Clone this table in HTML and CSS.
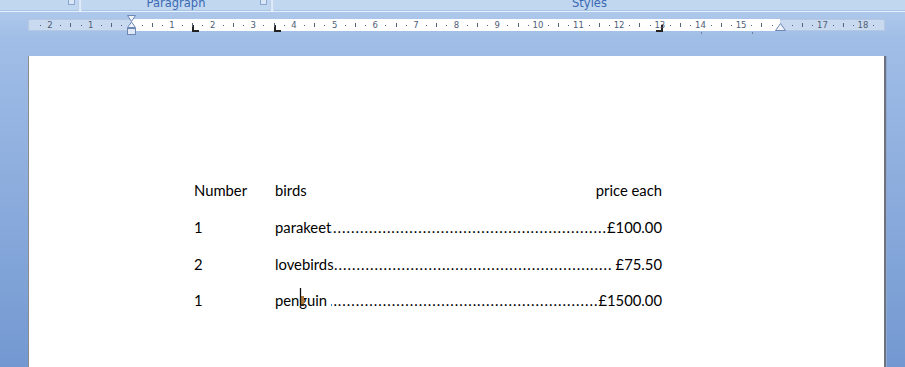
FILE: index.html
```html
<!DOCTYPE html>
<html>
<head>
<meta charset="utf-8">
<link rel="stylesheet" href="styles.css">
</head>
<body>
<div class="ribbon">
  <div class="group g1"><span class="launcher"></span></div>
  <div class="sep"></div>
  <div class="group g2"><span class="label">Paragraph</span><span class="launcher"></span></div>
  <div class="sep"></div>
  <div class="group g3"><span class="label">Styles</span></div>
</div>
<div class="ruler-bar">
  <div class="ruler" id="ruler">
    <div class="seg seg-gray seg-left"></div>
    <div class="seg seg-white"></div>
    <div class="seg seg-gray seg-right"></div>
    <svg class="marker hourglass" width="11" height="21" viewBox="0 0 11 21">
      <path d="M1.5 0.5 H9.5 L5.5 6.5 Z" fill="#eef3fb" stroke="#6f87b3"/>
      <path d="M5.5 7 L9.5 12.5 H1.5 Z" fill="#eef3fb" stroke="#6f87b3"/>
      <rect x="1.5" y="13.5" width="8" height="6" fill="#dfe8f6" stroke="#6f87b3"/>
    </svg>
    <svg class="marker tab tab1" width="7" height="7" viewBox="0 0 7 7"><path d="M1 0 V6 H7" fill="none" stroke="#222" stroke-width="2"/></svg>
    <svg class="marker tab tab2" width="7" height="7" viewBox="0 0 7 7"><path d="M1 0 V6 H7" fill="none" stroke="#222" stroke-width="2"/></svg>
    <svg class="marker tab tab3" width="7" height="7" viewBox="0 0 7 7"><path d="M6 0 V6 H0" fill="none" stroke="#222" stroke-width="2"/></svg>
    <svg class="marker rindent" width="11" height="8" viewBox="0 0 11 8">
      <path d="M5.5 0.5 L10.5 7.5 H0.5 Z" fill="#eef3fb" stroke="#6f87b3"/>
    </svg>
  </div>
  <span class="dtab dtab1"></span>
  <span class="dtab dtab2"></span>
</div>
<div class="doc">
  <div class="page">
    <div class="tabs">
      <div class="row">
        <span class="c1">Number</span>
        <span class="c2 head"><span>birds</span><span>price each</span></span>
      </div>
      <div class="row">
        <span class="c1">1</span>
        <span class="c2"><span>parakeet</span><span class="leader"><span>....................................................................................................</span></span><span>£100.00</span></span>
      </div>
      <div class="row">
        <span class="c1">2</span>
        <span class="c2"><span>lovebirds</span><span class="leader"><span>....................................................................................................</span></span><span class="gap-l">£75.50</span></span>
      </div>
      <div class="row">
        <span class="c1">1</span>
        <span class="c2"><span class="gap-r">penguin</span><span class="leader"><span>....................................................................................................</span></span><span>£1500.00</span></span>
      </div>
    </div>
    <svg class="ibeam" width="8" height="20" viewBox="0 0 8 20">
      <rect x="2" y="8" width="3" height="10" fill="#b07a3c"/>
      <path d="M1.5 0 V17 M1.5 17 H5" stroke="#111" stroke-width="1.3" fill="none"/>
    </svg>
  </div>
</div>
<script src="ruler.js"></script>
</body>
</html>
```
FILE: styles.css
```css
html, body {
  margin: 0;
  padding: 0;
}
body {
  width: 905px;
  height: 367px;
  overflow: hidden;
  background: #9fbce5;
  font-family: "Lato", "Liberation Sans", sans-serif;
}
.ribbon {
  display: flex;
  height: 11px;
  background: #c3d8f1;
  border-bottom: 1px solid #e6f0fb;
  overflow: hidden;
}
.group {
  position: relative;
  height: 10px;
  background: #c1d7f0;
  display: flex;
  justify-content: center;
  border-bottom: 1px solid #aac4e6;
  overflow: hidden;
}
.g1 { width: 78px; }
.g2 { width: 188px; }
.g3 { flex: 1; }
.sep {
  width: 4px;
  height: 11px;
  background: linear-gradient(to right, #a9c3e6, #eef5fd 50%, #b5cdec);
}
.label {
  font-family: "DejaVu Sans", sans-serif;
  font-size: 11.5px;
  line-height: 12px;
  margin-top: -3px;
  color: #3b69b3;
}
.launcher {
  position: absolute;
  right: 3px;
  top: 0;
  width: 5px;
  height: 4px;
  border: 1px solid #8aa6cf;
  border-top: none;
  background: #d8e6f6;
}
.ruler-bar {
  position: relative;
  height: 23px;
  background: linear-gradient(to bottom, #aec8ea, #a2bfe7);
  padding-left: 28px;
  box-sizing: border-box;
  padding-top: 7px;
}
.ruler {
  position: relative;
  width: 857px;
  height: 12px;
  display: flex;
}
.seg { height: 12px; box-sizing: border-box; }
.seg-gray {
  background: #c9d9ef;
  border: 1px solid #b4c8e4;
}
.seg-left { width: 103px; border-right: none; }
.seg-white { width: 649px; background: #ffffff; }
.seg-right { flex: 1; border-left: none; }
.tick {
  position: absolute;
  background: #55627a;
  width: 1px;
}
.tick.dot { height: 1px; top: 6px; }
.tick.line { height: 4px; top: 4px; }
.num {
  position: absolute;
  top: 0;
  width: 14px;
  margin-left: -7px;
  text-align: center;
  font-family: "DejaVu Sans", sans-serif;
  font-size: 8.5px;
  line-height: 12px;
  color: #4e5d75;
}
.marker { position: absolute; }
.hourglass { left: 98px; top: -4px; }
.tab { top: 6px; }
.tab1 { left: 164px; }
.tab2 { left: 246px; }
.tab3 { left: 628px; }
.rindent { left: 747px; top: 4px; }
.dtab {
  position: absolute;
  top: 20px;
  width: 1px;
  height: 2px;
  background: #6f7f98;
}
.dtab1 { left: 701px; }
.dtab2 { left: 752px; }
.doc {
  height: 333px;
  background: linear-gradient(to bottom, #a1bee7, #7398d1);
  padding: 21px 20px 0 28px;
  box-sizing: border-box;
}
.page {
  position: relative;
  width: 856px;
  height: 320px;
  background: #ffffff;
  border-left: 1px solid #8c8c8c;
  box-shadow: 2px 0 0 #6c7280, 3px 0 0 #8fa8cc;
  box-sizing: border-box;
  padding: 116px 0 0 165px;
}
.tabs {
  display: flex;
  flex-direction: column;
}
.row {
  display: grid;
  grid-template-columns: 81px 387px;
  height: 36.67px;
  align-items: center;
  font-size: 14.8px;
  line-height: 18px;
  color: #000;
}
.c2 {
  display: flex;
  white-space: nowrap;
}
.head { justify-content: space-between; }
.leader {
  flex: 1;
  overflow: hidden;
  display: flex;
  justify-content: flex-end;
}
.leader span {
  flex-shrink: 0;
  letter-spacing: 1px;
}
.gap-l { margin-left: 3px; }
.gap-r { margin-right: 4px; }
.ibeam {
  position: absolute;
  left: 270px;
  top: 232px;
}
```
FILE: ruler.js
```js
(function () {
  var ruler = document.getElementById('ruler');
  var zero = 103.35, cm = 40.65, q = cm / 4;
  for (var i = -10; i <= 74; i++) {
    var x = zero + i * q;
    if (x < 2 || x > 855) continue;
    if (i === 0 || i === 64) continue;
    var m = ((i % 4) + 4) % 4;
    var el;
    if (m === 0) {
      el = document.createElement('span');
      el.className = 'num';
      el.textContent = Math.abs(i / 4);
      el.style.left = x.toFixed(1) + 'px';
    } else {
      el = document.createElement('span');
      el.className = 'tick ' + (m === 2 ? 'line' : 'dot');
      el.style.left = Math.round(x) + 'px';
    }
    ruler.appendChild(el);
  }
})();
```
